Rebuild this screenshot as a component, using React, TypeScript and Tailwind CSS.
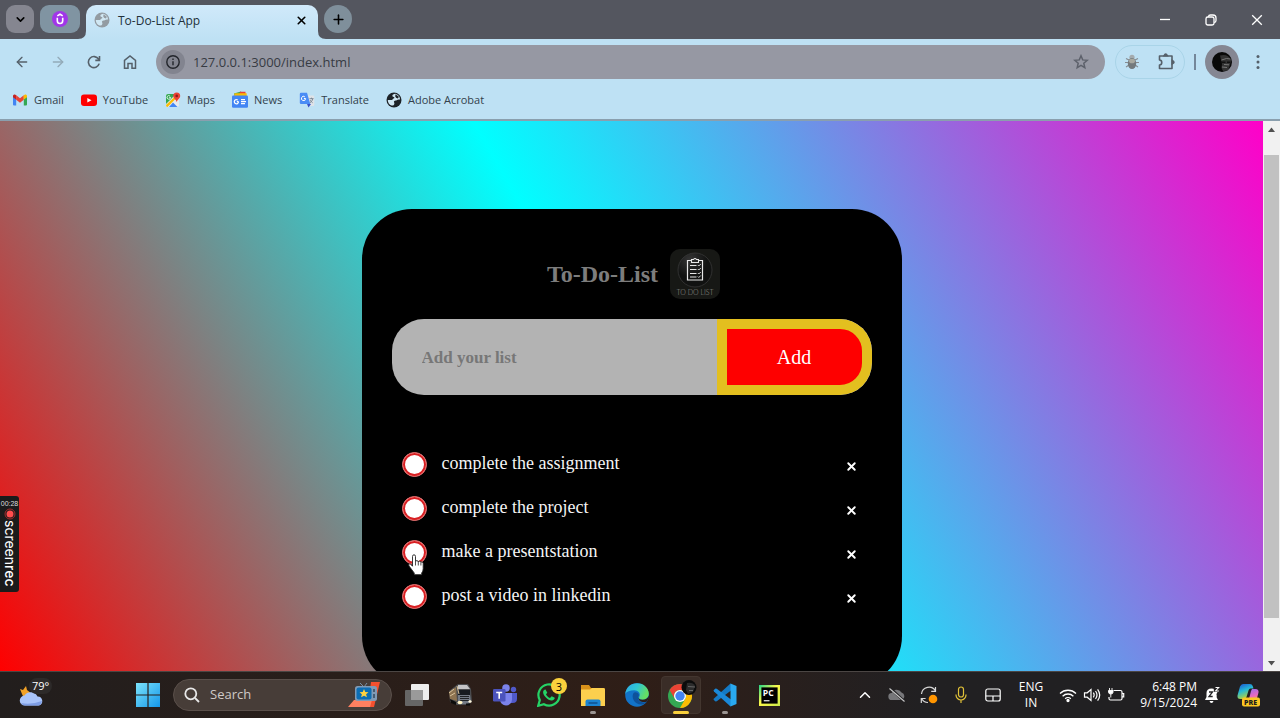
import React from "react";
import { ArrowLeft, ArrowRight, ChevronDown, ChevronUp, Plus, X } from "lucide-react";

const bookmarks = [
  { name: "Gmail", icon: <GmailIcon /> },
  { name: "YouTube", icon: <YouTubeIcon /> },
  { name: "Maps", icon: <MapsIcon /> },
  { name: "News", icon: <NewsIcon /> },
  { name: "Translate", icon: <TranslateIcon /> },
  { name: "Adobe Acrobat", icon: <GlobeIcon className="size-4 text-[#1d2227]" /> },
];

const tasks = [
  "complete the assignment",
  "complete the project",
  "make a presentstation",
  "post a video in linkedin",
];

function GlobeIcon({ className }: { className: string }) {
  return (
    <svg viewBox="0 0 16 16" className={className} aria-hidden="true">
      <circle cx="8" cy="8" r="7.5" fill="currentColor" />
      <path
        d="M9 1.800C7 2.200 5.800 3.400 6.600 4.500c.6.700 1.700.4 1.800 1.300 0 .8-1.300.7-1.700 1.500-.4.900-1.500.9-2.500.7H1.800c-.1 2.600 1.500 4.700 3.700 5.500 1.900.3 2.900-.8 2.900-2 .1-1-.9-1.400-.3-2.200.7-.8 2.200-.4 2.900-1.200.6-.6 1.700-.7 3-.5C14 4.700 11.900 2.200 9 1.800Z"
        fill="#d0e7f3"
      />
      <path d="M9.600 2.200l3.300 2.600-1 1.700-1.900-.7-.8-1.600z" fill="currentColor" />
    </svg>
  );
}

function GmailIcon() {
  return (
    <svg viewBox="0 0 16 16" className="size-4" aria-hidden="true">
      <path d="M1 4v8.500q0 1 1 1h2.200V6.300z" fill="#4285f4" />
      <path d="M15 4v8.500q0 1-1 1h-2.200V6.300z" fill="#34a853" />
      <path d="M1 4q0-2 2-1.500L4.400 3.500v4.200L1 5.200z" fill="#c5221f" />
      <path d="M4.200 3.300 8 6.200l3.800-2.900v4.500L8 10.700 4.200 7.800z" fill="#ea4335" />
      <path d="M15 4q0-2-2-1.500l-1.400 1v4.200L15 5.200z" fill="#fbbc04" />
    </svg>
  );
}

function YouTubeIcon() {
  return (
    <svg viewBox="0 0 16 16" className="size-4" aria-hidden="true">
      <rect x="0" y="2.500" width="16" height="11.500" rx="3" fill="#f00" />
      <path d="M6.300 5.900v4.700l4.200-2.350z" fill="#fff" />
    </svg>
  );
}

function MapsIcon() {
  return (
    <svg viewBox="0 0 16 16" className="size-4" aria-hidden="true">
      <rect x="1" y="2" width="13" height="13" rx="2" fill="#e8eaed" />
      <path d="M1 4q0-2 2-2h8L1 12z" fill="#34a853" />
      <path d="M1 13 11 3.500l1.500 1.500L2.500 15Q1 15 1 13z" fill="#fbbc04" />
      <path d="M4 15 8 10.500l4.500 4.500z" fill="#4285f4" />
      <path d="M9 9l5 5V7z" fill="#e4e7ea" />
      <path d="M11.700.5a3.500 3.500 0 0 0-3.500 3.500c0 2.300 2.500 3 3.500 6 1-3 3.500-3.700 3.500-6A3.500 3.500 0 0 0 11.700.5z" fill="#ea4335" />
      <circle cx="11.700" cy="3.900" r="1.300" fill="#8c1d18" />
      <path d="M5.800 5.500H4.200M5.600 5.700a1.800 1.800 0 1 1-.5-1.500" stroke="#fff" strokeWidth=".8" fill="none" />
    </svg>
  );
}

function NewsIcon() {
  return (
    <svg viewBox="0 0 16 16" className="size-4 overflow-visible" aria-hidden="true">
      <path d="M2 1.500 9-.5l1 3-7 3z" fill="#34a853" />
      <path d="M8-.2h5.500v4H7z" fill="#ea4335" />
      <path d="M2.500 1.200h12.200v4H2z" fill="#fbbc04" />
      <rect x="0" y="3.500" width="16" height="12.300" rx="1.200" fill="#4285f4" />
      <path d="M6.600 9.700H4.800M6.500 9.800a2.100 2.100 0 1 1-.7-1.700M9 7.700h4M9 9.700h5M9 11.700h4" stroke="#fff" strokeWidth="1.200" fill="none" />
    </svg>
  );
}

function TranslateIcon() {
  return (
    <svg viewBox="0 0 16 16" className="size-4" aria-hidden="true">
      <path d="M6 3.500h8q1.300 0 1.300 1.300v8q0 1.300-1.300 1.300H9z" fill="#dfe3e8" />
      <path d="M8 12h4l-2.500 3.500z" fill="#3550c8" />
      <path d="M2 .8h6L11.300 12H2Q.8 12 .8 10.800V2Q.8.800 2 .8z" fill="#4a8cf5" />
      <path d="M6.700 6.500H4.900M6.600 6.600a2.100 2.100 0 1 1-.7-1.700" stroke="#fff" strokeWidth="1" fill="none" />
      <path d="M10.500 6.700h4M12.500 5.700v1M13.700 6.700c-.3 2-1.300 3-2.700 4M11.300 8.200c.5 1 1.300 2 2.300 2.500" stroke="#74808d" strokeWidth=".9" fill="none" />
    </svg>
  );
}

function TabStrip() {
  return (
    <header className="flex h-[39px] shrink-0 items-stretch bg-[#54565f] pl-1.5">
      <button aria-label="Search tabs" className="mt-[5px] grid size-7 place-items-center rounded-[9px] bg-[#858690] text-black">
        <ChevronDown size={13} strokeWidth={3} />
      </button>
      <button aria-label="Udemy" className="mt-[5px] ml-1.5 grid h-7 w-10 place-items-center rounded-[9px] bg-[#8094a2]">
        <svg viewBox="0 0 16 16" className="size-4" aria-hidden="true">
          <circle cx="8" cy="8" r="8" fill="#a136e8" />
          <path d="M5.300 6.800v3a2.700 2.700 0 0 0 5.400 0v-3M5.300 4.900 8 3.200l2.700 1.700" fill="none" stroke="#fff" strokeWidth="1.600" />
        </svg>
      </button>
      <svg viewBox="0 0 8 8" className="-ml-0.5 size-2 self-end" aria-hidden="true">
        <path d="M8 0v8H0Q8 8 8 0z" fill="#bee1f4" />
      </svg>
      <div className="mt-[5px] flex w-[232px] items-center rounded-t-[10px] bg-linear-to-b from-[#d0e9fa] to-[#bee1f4] pr-2.5 pb-1 pl-2">
        <GlobeIcon className="size-4 text-[#939ba2]" />
        <span className="ml-2 flex-1 pt-0.5 text-[12px] text-[#22303a]">To-Do-List App</span>
        <button aria-label="Close tab" className="text-black">
          <X size={13} strokeWidth={3} />
        </button>
      </div>
      <svg viewBox="0 0 8 8" className="size-2 self-end" aria-hidden="true">
        <path d="M0 0v8h8Q0 8 0 0z" fill="#bee1f4" />
      </svg>
      <button aria-label="New tab" className="mt-[5px] -ml-0.5 grid size-7 place-items-center rounded-full bg-[#7f8f9b] text-black">
        <Plus size={15} strokeWidth={2.5} />
      </button>
      <div className="ml-auto flex items-center text-white">
        <button aria-label="Minimize" className="grid w-[46px] place-items-center">
          <svg viewBox="0 0 12 12" className="size-3" aria-hidden="true">
            <path d="M1 5.500h10" stroke="currentColor" strokeWidth="1.300" />
          </svg>
        </button>
        <button aria-label="Restore" className="grid w-[46px] place-items-center">
          <svg viewBox="0 0 12 12" className="size-3" fill="none" stroke="currentColor" strokeWidth="1.300" aria-hidden="true">
            <rect x="1" y="3" width="8" height="8" rx="1.800" />
            <path d="M3.300 2.800Q3.700 1 5.500 1H8Q11 1 11 4v2.500q0 1.700-1.800 2.100" />
          </svg>
        </button>
        <button aria-label="Close" className="grid w-[46px] place-items-center">
          <svg viewBox="0 0 12 12" className="size-3" aria-hidden="true">
            <path d="M1.200 1.200l9.600 9.600M10.800 1.200l-9.600 9.600" stroke="currentColor" strokeWidth="1.300" />
          </svg>
        </button>
      </div>
    </header>
  );
}

function Toolbar() {
  return (
    <nav className="flex h-[46px] shrink-0 items-center bg-[#bee1f4] pr-[11px] pl-2 text-[#55606a]">
      <div className="flex gap-2">
        <button aria-label="Back" className="grid size-7 place-items-center">
          <ArrowLeft size={16} strokeWidth={2} />
        </button>
        <button aria-label="Forward" className="grid size-7 place-items-center text-[#93aab8]">
          <ArrowRight size={16} strokeWidth={2} />
        </button>
        <button aria-label="Reload" className="grid size-7 place-items-center">
          <svg viewBox="0 0 14 14" className="size-3.5" fill="none" stroke="currentColor" strokeWidth="1.600" aria-hidden="true">
            <path d="M12.200 8.600A5.500 5.500 0 1 1 11.600 4.200L12.700 5.300M12.500 1v4.400H8.300" />
          </svg>
        </button>
        <button aria-label="Home" className="grid size-7 place-items-center">
          <svg viewBox="0 0 14 16" className="h-4 w-3.5" fill="none" stroke="currentColor" strokeWidth="1.500" aria-hidden="true">
            <path d="M1.500 6.300 7 2l5.500 4.300v8H9V9.500H5v4.800H1.500z" />
          </svg>
        </button>
      </div>
      <div className="ml-3 flex h-[34px] flex-1 items-center rounded-full bg-[#9698a3] pr-4 pl-[5px]">
        <button aria-label="Site information" className="grid size-6 place-items-center rounded-full bg-[#82848f] text-[#22252b]">
          <svg viewBox="0 0 14 14" className="size-3.5" fill="none" stroke="currentColor" strokeWidth="1.400" aria-hidden="true">
            <circle cx="7" cy="7" r="6.200" />
            <path d="M7 6.200v4M7 3.600v1.400" />
          </svg>
        </button>
        <input
          aria-label="Address"
          defaultValue="127.0.0.1:3000/index.html"
          className="ml-2 min-w-0 flex-1 bg-transparent pt-0.5 text-[13px] text-[#373b43] outline-none"
        />
        <button aria-label="Bookmark this page" className="text-[#5d616b]">
          <svg viewBox="0 0 16 16" className="size-4" fill="none" stroke="currentColor" strokeWidth="1.500" aria-hidden="true">
            <path d="M8 1.800l1.700 4.100 4.500.4-3.400 2.900 1 4.400L8 11.300l-3.800 2.300 1-4.400L1.800 6.300l4.500-.4z" />
          </svg>
        </button>
      </div>
      <div className="ml-2.5 flex h-[34px] w-[70px] items-center justify-between rounded-full border border-[#a9d4e8] px-2">
        <button aria-label="Debugger extension">
          <svg viewBox="0 0 16 16" className="size-4" aria-hidden="true">
            <path d="M5 6 2 4.500M4.500 8.500H1M5 11l-3 2M11 6l3-1.500M11.500 8.500H15M11 11l3 2" stroke="#858b90" strokeWidth="1.100" fill="none" />
            <circle cx="8" cy="3.300" r="2.600" fill="#a4abae" />
            <ellipse cx="8" cy="9.500" rx="4.200" ry="5.500" fill="#73797c" />
            <ellipse cx="8" cy="7" rx="3" ry="2.300" fill="#a9a9a0" />
          </svg>
        </button>
        <button aria-label="Extensions">
          <svg viewBox="0 0 18 18" className="size-[18px]" fill="none" stroke="currentColor" strokeWidth="1.600" aria-hidden="true">
            <path d="M1.500 3h12.500v12.500h-12.500v-3.500c3 0 3-5 0-5z" strokeLinejoin="round" />
            <path d="M6 2.800q1.700-3.300 3.400 0zM14.300 7.500q3.300 1.700 0 3.400z" fill="currentColor" />
          </svg>
        </button>
      </div>
      <span className="mx-[9px] h-4 w-0.5 bg-[#74879a]" />
      <button aria-label="Profile" className="grid size-[34px] place-items-center rounded-full bg-[#858793]">
        <svg viewBox="0 0 20 20" className="size-5" aria-hidden="true">
          <circle cx="10" cy="10" r="10" fill="#090909" />
          <path d="M8 3.500c5-1.500 9 0 11 4.500l-1 5-2 5.500-5 .5-1.500-3 .5-4z" fill="#333" />
          <path d="M9.500 8l5-1.500 4 .5M10 15l5 .5M12 12.500l5 .3" stroke="#777" strokeWidth="1" fill="none" />
          <path d="M9 10.200h4.500M15 10.200h3" stroke="#111" strokeWidth="1.500" />
        </svg>
      </button>
      <button aria-label="Menu" className="ml-2 grid w-[22px] place-items-center">
        <svg viewBox="0 0 4 16" className="h-4 w-1" fill="currentColor" aria-hidden="true">
          <circle cx="2" cy="2.500" r="1.500" />
          <circle cx="2" cy="8" r="1.500" />
          <circle cx="2" cy="13.500" r="1.500" />
        </svg>
      </button>
    </nav>
  );
}

function Bookmarks() {
  return (
    <nav className="flex h-9 shrink-0 items-center gap-[17px] border-b-2 border-[#8a9fae] bg-[#bee1f4] px-3 pb-1">
      {bookmarks.map((b) => (
        <a key={b.name} href="#" className="flex items-center gap-1.5 text-[11px] text-[#33414c]">
          {b.icon}
          {b.name}
        </a>
      ))}
    </nav>
  );
}

function TodoBadge() {
  return (
    <div className="flex size-[50px] flex-col items-center rounded-[10px] bg-[#171815] pt-[3px]">
      <svg viewBox="0 0 36 36" className="size-9" aria-hidden="true">
        <defs>
          <radialGradient id="disc" cx=".35" cy=".2">
            <stop offset="0" stopColor="#353535" />
            <stop offset="1" stopColor="#111211" />
          </radialGradient>
        </defs>
        <circle cx="18" cy="18" r="17" fill="url(#disc)" stroke="#373737" strokeWidth=".8" />
        <path d="M14 8.500h-3.500v19.500h15v-19.500H22" fill="none" stroke="#e8e8e8" strokeWidth="1.200" />
        <path d="M14.500 7.500h2q1.500-2 3 0h2v3h-7z" fill="none" stroke="#e8e8e8" strokeWidth="1.100" />
        <path d="M13 13.500h6.500M13 17.500h6.500M13 21.500h6.500M13 25h6.500" stroke="#e8e8e8" strokeWidth="1.100" />
        <path d="M20.800 13l1 1 2-2M20.800 17l1 1 2-2M20.800 21l1 1 2-2M20.800 24.500l1 1 2-2" stroke="#e8e8e8" strokeWidth=".9" fill="none" />
      </svg>
      <span className="font-['Lato',sans-serif] text-[7px] leading-[9px] font-light whitespace-nowrap text-[#9c9d98]">TO DO LIST</span>
    </div>
  );
}

function HandCursor() {
  return (
    <svg viewBox="0 0 16 22" className="pointer-events-none absolute top-6 left-1.5 h-[22px] w-4" aria-hidden="true">
      <path
        d="M4.500 2.500q0-1.700 1.500-1.700t1.500 1.700v5q.3-1 1.500-.8 1.200 0 1.300 1.200.3-.9 1.400-.7 1.100.2 1.200 1.200.3-.6 1.200-.4 1.100.3 1.100 1.500v5q0 3-1.500 4.500v1.700H6.500l-.5-2L1 12q-.8-1.600.3-2 1-.4 2 .8l1.200 1.400z"
        fill="#fff"
        stroke="#222"
        strokeWidth=".9"
      />
      <path d="M7.500 7.500v4M10.300 8v3.500M12.900 8.500v3" stroke="#222" strokeWidth=".8" />
    </svg>
  );
}

function TodoCard() {
  return (
    <section className="mx-auto mt-22 w-[540px] max-w-full rounded-[50px] bg-black px-[30px] pt-10 pb-[68px] font-['Liberation_Serif',serif]">
      <div className="flex items-center justify-center gap-3 pl-1">
        <h1 className="text-[24px] font-bold text-[#7d7d7d]">To-Do-List</h1>
        <TodoBadge />
      </div>
      <form className="mt-5 flex h-[76px] overflow-hidden rounded-[32px] bg-[#b3b3b3]" onSubmit={(e) => e.preventDefault()}>
        <input
          aria-label="Add your list"
          placeholder="Add your list"
          className="min-w-0 flex-1 bg-transparent px-[30px] pt-0.5 text-[17px] font-bold outline-none placeholder:text-[#777]"
        />
        <button className="w-[155px] rounded-r-[32px] border-10 border-[#e3bf1f] bg-[#fe0000] text-[20px] text-white">Add</button>
      </form>
      <ul className="mt-[47px] px-2.5">
        {tasks.map((task, i) => (
          <li key={task} className="relative flex h-11 items-center">
            <input
              id={`task-${i}`}
              type="checkbox"
              className="size-[25px] appearance-none rounded-full border border-[#e25c5c] bg-white ring-2 ring-[#d81f22] ring-inset"
            />
            <label htmlFor={`task-${i}`} className="ml-[15px] flex-1 pb-0.5 text-[18px] text-[#f4f4f4]">
              {task}
            </label>
            <button aria-label={`Remove ${task}`} className="pt-1 pr-1 text-white">
              <X size={13} strokeWidth={3.5} />
            </button>
            {i === 2 && <HandCursor />}
          </li>
        ))}
      </ul>
    </section>
  );
}

function Scrollbar() {
  return (
    <div className="flex w-[17px] shrink-0 flex-col items-center bg-[#f1f1f1]" aria-hidden="true">
      <svg viewBox="0 0 17 17" className="size-[17px]">
        <path d="M5 11h7L8.500 6.500z" fill="#505050" />
      </svg>
      <div className="flex w-full flex-1 flex-col px-px pt-[17px] pb-9">
        <div className="flex-1 bg-[#c1c1c1]" />
      </div>
      <svg viewBox="0 0 17 17" className="size-[17px]">
        <path d="M5 7h7l-3.500 4.500z" fill="#505050" />
      </svg>
    </div>
  );
}

function Recorder() {
  return (
    <div className="absolute top-[375px] left-0 flex h-24 w-[19px] flex-col items-center rounded-r-[3px] bg-[#1b1b1b] pt-1 text-white">
      <span className="font-['Liberation_Sans',sans-serif] text-[7px] leading-[8px] text-[#dddddd]">00:28</span>
      <svg viewBox="0 0 12 12" className="size-3 shrink-0" aria-hidden="true">
        <circle cx="6" cy="6" r="5" fill="none" stroke="#a52c2c" strokeWidth="1" />
        <circle cx="6" cy="6" r="3.500" fill="#ff4d4d" />
      </svg>
      <span className="font-['Inter',sans-serif] text-[14px] leading-[18px] whitespace-nowrap [writing-mode:vertical-rl]">
        screen<b className="font-medium">rec</b>
      </span>
    </div>
  );
}

function TaskbarButton({ label, children, marker = "" }: { label: string; children: React.ReactNode; marker?: string }) {
  return (
    <button aria-label={label} className="relative grid h-full w-11 place-items-center">
      {marker === "active" && <span className="absolute inset-x-0.5 top-1 bottom-1 rounded-[4px] border border-[#43362f] bg-[#3a2d27]" />}
      {children}
      {marker === "active" && <span className="absolute bottom-1 h-[3px] w-4 rounded-full bg-[#f9cf3c]" />}
      {marker === "open" && <span className="absolute bottom-1 h-[3px] w-1.5 rounded-full bg-[#9b9592]" />}
    </button>
  );
}

function Taskbar() {
  return (
    <footer className="flex h-[47px] shrink-0 items-center border-t border-[#4b4644] bg-linear-to-r from-[#221e1d] via-[#2f1e17] via-50% to-[#212022] to-72% pr-3 text-white">
      <button aria-label="Weather, 79 degrees" className="relative h-full w-[126px]">
        <svg viewBox="0 0 26 22" className="absolute top-3 left-[19px] h-[22px] w-[26px]" aria-hidden="true">
          <path d="M1 5l3 1 3-4 1 4 5 4-8 4-2-4z" fill="#f2a227" />
          <path d="M6 21.500a5 5 0 0 1-.5-10 7.500 7.500 0 0 1 13 1 4.600 4.600 0 0 1 1.500 9z" fill="#a9c4fa" />
          <path d="M2 19q10 2 21-2-1 4.500-4 4.500H6q-2.500 0-4-2.500z" fill="#7e9de4" />
        </svg>
        <span className="absolute top-1.5 left-[29px] rounded-full bg-[#2d2a29] px-[3px] text-[11px] leading-[16px]">79°</span>
      </button>
      <TaskbarButton label="Start">
        <svg viewBox="0 0 24 24" className="size-6" aria-hidden="true">
          <defs>
            <linearGradient id="win" x2="1" y2="1">
              <stop stopColor="#7ce4fc" />
              <stop offset="1" stopColor="#1496e8" />
            </linearGradient>
          </defs>
          <path d="M0 0h11.400v11.400H0zM12.600 0H24v11.400H12.600zM0 12.600h11.400V24H0zM12.600 12.600H24V24H12.600z" fill="url(#win)" />
        </svg>
      </TaskbarButton>
      <label className="mx-[3px] flex h-8 w-[219px] items-center rounded-full border border-[#5a4f4a] bg-[#473d38] px-2.5">
        <svg viewBox="0 0 16 16" className="size-4" fill="none" stroke="#e8e8e8" strokeWidth="1.800" aria-hidden="true">
          <circle cx="6.800" cy="6.800" r="5.500" />
          <path d="M11 11l4 4" />
        </svg>
        <input aria-label="Search" placeholder="Search" className="ml-2.5 min-w-0 flex-1 bg-transparent text-[13px] outline-none placeholder:text-[#cfcac7]" />
        <svg viewBox="0 0 34 28" className="h-7 w-[34px]" aria-hidden="true">
          <path d="M24 1h9l-6 25h-6z" fill="#f4502f" />
          <path d="M7 19h18l-2 7H1z" fill="#ff8060" />
          <path d="M13 2l4 4 3-4" stroke="#7892a6" fill="none" />
          <rect x="8" y="5" width="22" height="15" rx="2.500" fill="#7f9bb7" />
          <rect x="9.500" y="6.500" width="15" height="12" rx="2" fill="#0b6eb5" />
          <path d="M17 8l1.300 2.900 3.200.3-2.400 2 .8 3.100-2.900-1.600-2.900 1.600.8-3.100-2.400-2 3.200-.3z" fill="#ffd23f" />
          <path d="M27 8v3M27 13v4" stroke="#354a60" strokeWidth="1.500" />
        </svg>
      </label>
      <TaskbarButton label="Task view">
        <svg viewBox="0 0 26 24" className="h-6 w-[26px]" aria-hidden="true">
          <rect x="7" y="1" width="18" height="16" rx="1" fill="#eeeeee" />
          <rect x="1" y="7" width="18" height="16" rx="1" fill="#666" />
          <path d="M7 7h12v10H7z" fill="#9a9a9a" />
        </svg>
      </TaskbarButton>
      <TaskbarButton label="Truck simulator">
        <svg viewBox="0 0 26 24" className="h-6 w-[26px]" aria-hidden="true">
          <path d="M1 8l9-7h10l3 5 1 13-4 3H9L2 19z" fill="#4a4b4e" />
          <path d="M1 9l7-5 1 14-7-2z" fill="#8d7350" />
          <path d="M10 2h9l3 4H10z" fill="#c4c4c6" />
          <path d="M10 7h12v5H10z" fill="#171b20" />
          <path d="M10 12h12l1 7-4 2h-9z" fill="#737a85" />
          <path d="M12 13.500h9M12 15.500h9M12 17.500h9" stroke="#202326" strokeWidth="1" />
          <path d="M2 16l6 3v3l-5-2zM18 20.500h4v2h-4z" fill="#0b0b0b" />
          <path d="M1 10l5-4M2 13l5-3M9 3l2 8" stroke="#d9c39c" strokeWidth="1" />
          <ellipse cx="12" cy="19.500" rx="2.500" ry="1.800" fill="#fff3c4" />
          <ellipse cx="22" cy="18.500" rx="1.600" ry="1.300" fill="#fff7dc" />
        </svg>
      </TaskbarButton>
      <TaskbarButton label="Teams">
        <svg viewBox="0 0 26 24" className="h-6 w-[26px]" aria-hidden="true">
          <circle cx="21.500" cy="6.500" r="2.700" fill="#5059c9" />
          <path d="M17 10h8v6q0 4-4.500 4H17z" fill="#5059c9" />
          <circle cx="14" cy="5" r="3.800" fill="#7b83eb" />
          <path d="M8 10h12v6.500a6 6 0 0 1-12 0z" fill="#7b83eb" />
          <rect x="1" y="6" width="12.500" height="12.500" rx="1.200" fill="#4b53bc" />
          <path d="M4.200 9.500h6M7.200 9.500v6.300" stroke="#fff" strokeWidth="1.600" />
        </svg>
      </TaskbarButton>
      <TaskbarButton label="WhatsApp, 3 unread">
        <svg viewBox="0 0 24 24" className="size-6" aria-hidden="true">
          <path d="M1.200 22.800l1.600-5.700a10.600 10.600 0 1 1 4.100 4.100z" fill="#2d1f19" stroke="#25d366" strokeWidth="2.200" />
          <path d="M8.500 6.500c-.7-.3-2.400.7-2.400 2.700 0 3.200 4.800 8.300 8.500 8.300 2 0 3.300-1.600 3.100-2.700l-3-1.500-1.700 1.700c-1.700-.6-3.300-2.200-4-3.800l1.300-1.500z" fill="#25d366" />
        </svg>
        <span className="absolute top-[6px] right-1 grid size-4 place-items-center rounded-full bg-[#fbd13d] text-[11px] leading-none text-black">3</span>
      </TaskbarButton>
      <TaskbarButton label="File Explorer" marker="open">
        <svg viewBox="0 0 26 24" className="h-6 w-[26px]" aria-hidden="true">
          <path d="M1 2h8l2 3h13.500v6H1z" fill="#d8911a" />
          <path d="M1 6.500h9l2-1.500h11.500q1.500 0 1.500 1.500V23H1z" fill="#fccf4e" />
          <path d="M5.500 23v-4.500q0-2 2-2h11q2 0 2 2V23z" fill="#1b84d2" />
          <path d="M8.500 20h9" stroke="#0f4d8c" strokeWidth="1.400" />
        </svg>
      </TaskbarButton>
      <TaskbarButton label="Edge">
        <svg viewBox="0 0 24 24" className="size-6" aria-hidden="true">
          <defs>
            <linearGradient id="edge" x2="1" y2=".4">
              <stop stopColor="#2fa9e8" />
              <stop offset=".5" stopColor="#2fc6d4" />
              <stop offset="1" stopColor="#65df62" />
            </linearGradient>
          </defs>
          <circle cx="12" cy="12" r="11.800" fill="#1273c8" />
          <path d="M.3 11C1 4 6 .2 12 .2c7 0 11.800 5 11.800 10.300 0 4-3 6.300-6.300 6.300-3 0-4.300-1.200-3.300-2.700 2-3.600-1-6.800-5-6.800C5 7.300 1.500 8.500.3 11z" fill="url(#edge)" />
          <path d="M8.500 10c-2.500 4 .5 11.500 8 11.500 2.500 0 4.500-1.500 5.500-3-4 2-9 .5-9-3.500 0-1.500 1.200-2 .8-3.500-.5-2-4-3-5.300-1.500z" fill="#0e529b" />
          <path d="M14.200 14.100c-1 1.500.3 2.700 3.300 2.700 3 0 5.300-1.500 6.200-4 .3 2-.4 4-1.700 5.700-4 1.500-8.500 0-8.500-3.200z" fill="#2d1f19" />
        </svg>
      </TaskbarButton>
      <TaskbarButton label="Chrome" marker="active">
        <svg viewBox="0 0 32 30" className="relative h-[30px] w-8" aria-hidden="true">
          <circle cx="15" cy="16" r="12" fill="#34a853" />
          <path d="M4.600 10A12 12 0 0 1 25.400 10H15a6 6 0 0 0-5.200 9z" fill="#ea4335" />
          <path d="M15 10h10.400A12 12 0 0 1 15 28l5.200-9A6 6 0 0 0 15 10z" fill="#fbbc04" />
          <circle cx="15" cy="16" r="6" fill="#fff" />
          <circle cx="15" cy="16" r="4.700" fill="#4285f4" />
          <circle cx="24" cy="7.500" r="7.500" fill="#0c0c0c" />
          <path d="M22 3q6-1 8 3l-2 6-5 2-2-4z" fill="#2c2c2c" />
          <path d="M23 6.500l7 .5M24 10.500h4" stroke="#666" strokeWidth="1" />
        </svg>
      </TaskbarButton>
      <TaskbarButton label="Visual Studio Code" marker="open">
        <svg viewBox="0 0 24 24" className="size-6" aria-hidden="true">
          <path d="M17.500.5 1 15.500l-.5 1.200 2 1.800 1.300-.2L20 6z" fill="#1479c4" />
          <path d="M17.500 23.500 1 8.500.5 7.300l2-1.800 1.300.2L20 18z" fill="#1a88d8" />
          <path d="M17.500.5 23.500 3v18l-6 2.500z" fill="#29a9f0" />
        </svg>
      </TaskbarButton>
      <TaskbarButton label="PyCharm">
        <svg viewBox="0 0 22 22" className="size-[21px]" aria-hidden="true">
          <defs>
            <linearGradient id="pc" x2="1" y2="1">
              <stop stopColor="#21d789" />
              <stop offset=".45" stopColor="#fcf84a" />
              <stop offset="1" stopColor="#c9e94a" />
            </linearGradient>
          </defs>
          <rect width="22" height="22" fill="url(#pc)" />
          <rect x="2.500" y="2.500" width="17" height="17" fill="#000" />
          <text x="4" y="11" fontSize="9" fontWeight="700" fill="#fff" fontFamily="Open Sans, sans-serif">PC</text>
          <path d="M5 16.500h6" stroke="#fff" strokeWidth="1.200" />
        </svg>
      </TaskbarButton>
      <Tray />
    </footer>
  );
}

function Tray() {
  return (
    <div className="ml-auto flex h-full items-center text-[12px] leading-[16px] text-white">
      <button aria-label="Show hidden icons" className="grid w-8 place-items-center">
        <ChevronUp size={18} strokeWidth={2} />
      </button>
      <button aria-label="OneDrive, not signed in" className="grid w-8 place-items-center">
        <svg viewBox="0 0 18 16" className="h-4 w-[18px]" aria-hidden="true">
          <path d="M4 13a3.500 3.500 0 0 1-.3-7 5.500 5.500 0 0 1 9.800-.5A4 4 0 0 1 14 13z" fill="#77777a" />
          <path d="M2.500 1.500l14 13" stroke="#212022" strokeWidth="2.500" />
          <path d="M1.500 1.500l15 13" stroke="#c9c9c9" strokeWidth="1.100" />
        </svg>
      </button>
      <button aria-label="Updates available" className="grid w-8 place-items-center">
        <svg viewBox="0 0 18 18" className="size-[18px]" fill="none" aria-hidden="true">
          <path d="M1.500 8A7.500 7.500 0 0 1 15.500 5M15.500 1v4.300h-4.300M1.500 12.500A7.500 7.500 0 0 0 8 16.500M1.300 17v-4.500h4.300" stroke="#d8d8d8" strokeWidth="1.200" />
          <circle cx="13" cy="13" r="4.300" fill="#ff9500" />
        </svg>
      </button>
      <button aria-label="Microphone in use" className="grid w-8 place-items-center">
        <svg viewBox="0 0 12 18" className="h-[18px] w-3" fill="none" stroke="#e2c238" strokeWidth="1.200" aria-hidden="true">
          <rect x="3.500" y="1" width="5" height="10" rx="2.500" />
          <path d="M1 8.500v.5a5 5 0 0 0 10 0v-.5M6 14v3" />
        </svg>
      </button>
      <button aria-label="Touchpad" className="grid w-8 place-items-center">
        <svg viewBox="0 0 16 14" className="h-3.5 w-4" fill="none" stroke="#fff" strokeWidth="1.200" aria-hidden="true">
          <rect x=".8" y="1" width="14.400" height="12" rx="2" />
          <path d="M.8 8h14.400M8 8v5" />
        </svg>
      </button>
      <button aria-label="Keyboard language" className="w-11 text-center">
        ENG
        <br />
        IN
      </button>
      <div className="flex items-center gap-1.5 pr-2 pl-1.5">
        <svg viewBox="0 0 18 16" className="h-4 w-[18px]" fill="none" stroke="#fff" strokeWidth="1.300" aria-label="Wi-Fi">
          <path d="M1 6.500a11.500 11.500 0 0 1 16 0M3.600 9.200a7.700 7.700 0 0 1 10.800 0M6.200 11.700a4 4 0 0 1 5.600 0" />
          <circle cx="9" cy="13.500" r="1" fill="#fff" />
        </svg>
        <svg viewBox="0 0 18 16" className="h-4 w-[18px]" fill="none" stroke="#fff" strokeWidth="1.200" aria-label="Volume">
          <path d="M1.500 5.800h2.700L8 2.500v11l-3.800-3.300H1.500zM10.300 5.700q1.700 2.300 0 4.600M12.500 4q3 4 0 8M14.600 2.300q4.200 5.700 0 11.400" />
        </svg>
        <svg viewBox="0 0 18 16" className="h-4 w-[18px]" fill="none" stroke="#fff" strokeWidth="1.200" aria-label="Battery charging">
          <path d="M6.500 3.500h7q1.500 0 1.500 1.500v6.500q0 1.500-1.500 1.500h-10Q2 13 2 11.500V10M15.200 6.500h1.500v3.400h-1.500" />
          <path d="M2.500 1v2.500M5 1v2.500M1.500 3.500H6v1.800q0 1.700-2.200 1.700T1.500 5.300zM3.800 7v3.500" fill="#fff" strokeWidth=".9" />
        </svg>
      </div>
      <button className="w-[64px] text-right whitespace-nowrap">
        6:48 PM
        <br />
        9/15/2024
      </button>
      <button aria-label="Notifications" className="ml-[7px] grid w-4 place-items-center">
        <svg viewBox="0 0 16 18" className="h-[18px] w-4" aria-hidden="true">
          <path d="M1 14l1.500-3V7q0-4.500 5-4.500t5 4.500v4l1.500 3zM5.500 15h4q-.5 2-2 2t-2-2z" fill="#fff" />
          <path d="M5 6h3.500L5 10.500h3.700" fill="none" stroke="#252427" strokeWidth="1.300" />
          <path d="M9.500 0h6.500v6h-6z" fill="#212022" />
          <path d="M10 6.500h2.500L10 10h2.700M11.500 1.500h3.200L11.500 5h3.400" fill="none" stroke="#fff" strokeWidth="1.100" />
        </svg>
      </button>
      <button aria-label="Copilot preview" className="ml-2 grid w-10 place-items-center">
        <svg viewBox="0 0 26 26" className="size-[26px]" aria-hidden="true">
          <defs>
            <linearGradient id="cpa" x2=".4" y2="1">
              <stop stopColor="#1b4fd0" />
              <stop offset=".5" stopColor="#25b9d6" />
              <stop offset="1" stopColor="#b7d33a" />
            </linearGradient>
            <linearGradient id="cpb" x2=".3" y2="1">
              <stop stopColor="#8d6cf0" />
              <stop offset=".6" stopColor="#e868c0" />
              <stop offset="1" stopColor="#f59b5b" />
            </linearGradient>
          </defs>
          <path d="M8 2h7q2 0 2.700 2l.8 2.500h-3q-1.500 0-2 2L11.500 15q-.6 2-2.500 2H5.500Q2 17 2.500 13.500L5 4.500Q6 2 8 2z" fill="url(#cpa)" />
          <path d="M17 7h3.500q3.500 0 3 3.500L21.500 18q-1 3-3 3H11q2 0 2.500-2L16 9z" fill="url(#cpb)" />
          <rect x="7" y="15.500" width="18" height="9" rx="2" fill="#fbc623" />
          <text x="9" y="22.500" fontSize="7" fontWeight="800" fill="#1c1c1c" fontFamily="Open Sans, sans-serif">PRE</text>
        </svg>
      </button>
    </div>
  );
}

export default function App() {
  return (
    <div className="flex h-screen flex-col overflow-hidden font-['Open_Sans',sans-serif]">
      <TabStrip />
      <Toolbar />
      <Bookmarks />
      <div className="flex min-h-0 flex-1">
        <main className="relative min-w-0 flex-1 overflow-hidden bg-[linear-gradient(60deg,#ff0000,#00ffff,#ff00c8)]">
          <TodoCard />
          <Recorder />
        </main>
        <Scrollbar />
      </div>
      <Taskbar />
    </div>
  );
}
